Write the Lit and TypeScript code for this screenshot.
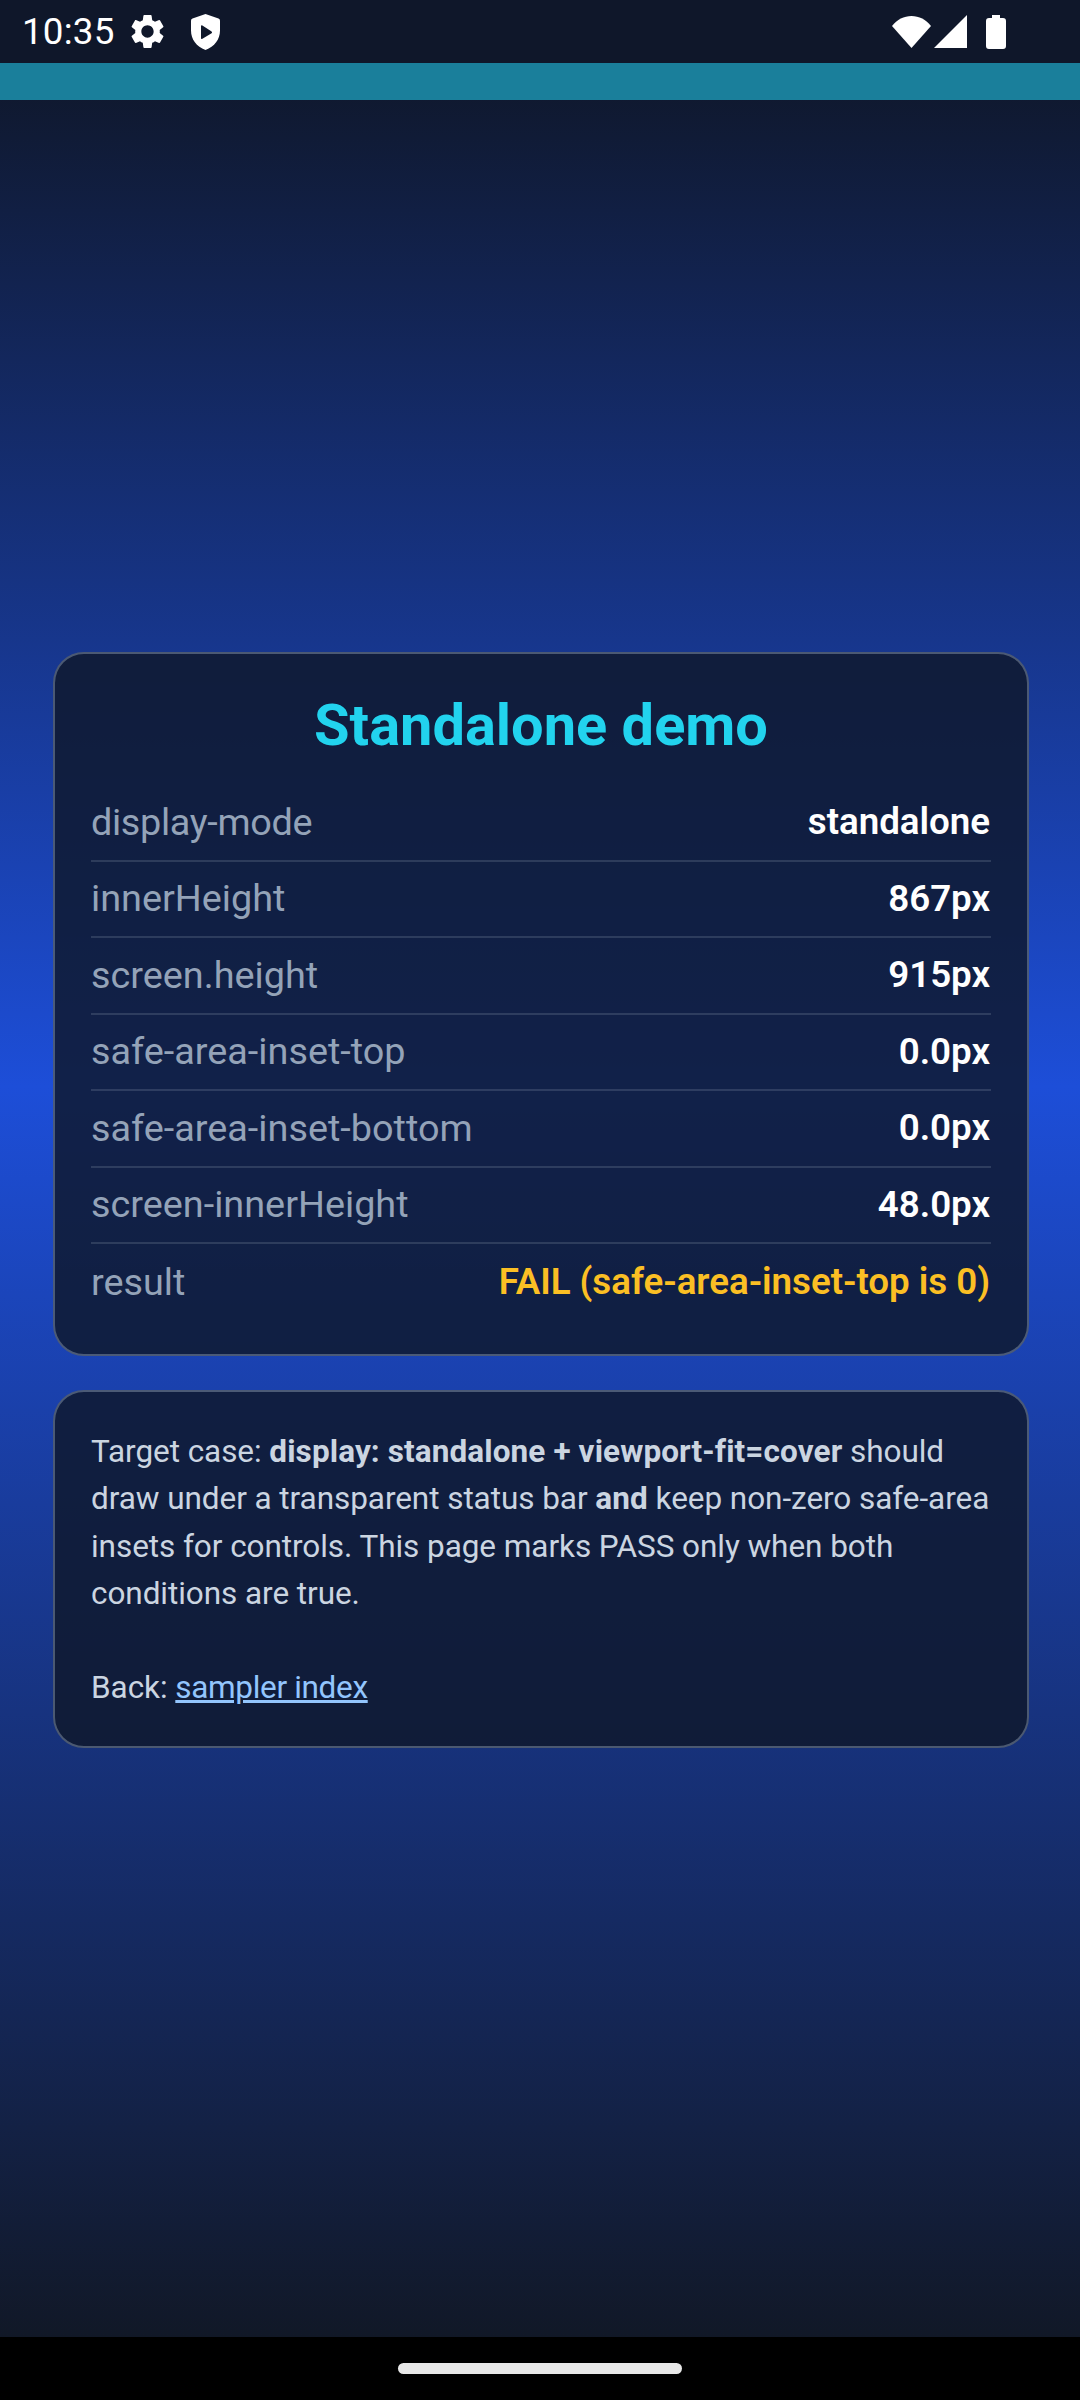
import { LitElement, html, css } from "lit";
import { customElement } from "lit/decorators.js";

const rows = [
  [html`<span class="tight">display-mode</span>`, "standalone"],
  ["innerHeight", "867px"],
  ["screen.height", "915px"],
  ["safe-area-inset-top", "0.0px"],
  ["safe-area-inset-bottom", "0.0px"],
  ["screen-innerHeight", "48.0px"],
];

@customElement("app-root")
export class AppRoot extends LitElement {
  static styles = css`
    :host {
      display: flex;
      flex-direction: column;
      width: 1080px;
      height: 2400px;
      background: #000;
      font-family: Roboto, "Liberation Sans", sans-serif;
      overflow: hidden;
    }
    .status {
      height: 63px;
      flex: none;
      background: #0f172a;
      display: flex;
      align-items: center;
      color: #fff;
      padding: 0 0 0 22px;
    }
    .time {
      font-size: 36.75px;
      letter-spacing: 0.2px;
    }
    .status-left {
      display: flex;
      gap: 23px;
      align-items: center;
      margin-left: 12px;
    }
    .status-right {
      display: flex;
      align-items: center;
      margin-left: auto;
      margin-right: 74px;
    }
    .wifi {
      margin-right: 3px;
    }
    .signal {
      margin-right: 19px;
    }
    svg {
      display: block;
      fill: #fff;
    }
    .page {
      flex: none;
      height: 2274px;
      position: relative;
      box-sizing: border-box;
      padding: 0 0 0 53px;
      display: flex;
      flex-direction: column;
      justify-content: center;
      gap: 34px;
      background: linear-gradient(180deg, #0f172a 0%, #1d4ed8 45%, #111827 100%);
    }
    .bar {
      position: absolute;
      top: 0;
      left: 0;
      right: 0;
      height: 37px;
      background: #1a7f9b;
    }
    .card {
      box-sizing: border-box;
      width: 976px;
      background: rgba(15, 23, 42, 0.82);
      border: 2px solid rgba(148, 163, 184, 0.45);
      border-radius: 31px;
      padding: 0 36px;
    }
    .card.info {
      padding: 36px 36px 34.5px;
      font-size: 31.5px;
      line-height: 47.25px;
      color: #cbd5e1;
      letter-spacing: -0.06px;
    }
    .card.stats {
      padding-top: 36px;
      padding-bottom: 33.25px;
    }
    h1 {
      margin: 0 0 25.25px;
      text-align: center;
      font-size: 57.75px;
      line-height: 70px;
      font-weight: 700;
      color: #22d3ee;
    }
    .row {
      display: flex;
      justify-content: space-between;
      height: 76.5px;
      box-sizing: border-box;
      align-items: center;
      padding-bottom: 1.5px;
      border-bottom: 2px solid rgba(148, 163, 184, 0.22);
    }
    .row:last-child {
      border-bottom: none;
    }
    .label {
      font-size: 37.8px;
      color: #94a3b8;
    }
    .tight {
      letter-spacing: -0.33px;
    }
    .value {
      font-size: 36.75px;
      color: #fff;
      font-weight: 600;
      padding-right: 1px;
      letter-spacing: -0.04px;
    }
    .value.fail {
      color: #fbbf24;
    }
    p {
      margin: 0;
    }
    p + p {
      margin-top: 47.25px;
    }
    b {
      font-weight: 700;
      letter-spacing: 0.1px;
    }
    a {
      color: #93c5fd;
      text-decoration: underline;
      letter-spacing: -0.33px;
    }
    .nav {
      flex: 1;
      background: #000;
      display: flex;
      justify-content: center;
    }
    .pill {
      width: 284px;
      height: 11px;
      margin-top: 26px;
      border-radius: 6px;
      background: #e8e8e8;
    }
  `;

  render() {
    return html`
      <div class="status">
        <span class="time">10:35</span>
        <div class="status-left">
          <svg width="41" height="41" viewBox="0 0 24 24">
            <path d="M19.14 12.94c.04-.3.06-.61.06-.94 0-.32-.02-.64-.07-.94l2.03-1.58a.49.49 0 0 0 .12-.61l-1.92-3.32a.488.488 0 0 0-.59-.22l-2.39.96c-.5-.38-1.03-.7-1.62-.94l-.36-2.54a.484.484 0 0 0-.48-.41h-3.84c-.24 0-.43.17-.47.41l-.36 2.54c-.59.24-1.13.57-1.62.94l-2.39-.96c-.22-.08-.47 0-.59.22L2.74 8.87c-.12.21-.08.47.12.61l2.03 1.58c-.05.3-.09.63-.09.94s.02.64.07.94l-2.03 1.58a.49.49 0 0 0-.12.61l1.92 3.32c.12.22.37.29.59.22l2.39-.96c.5.38 1.03.7 1.62.94l.36 2.54c.05.24.24.41.48.41h3.84c.24 0 .44-.17.47-.41l.36-2.54c.59-.24 1.13-.56 1.62-.94l2.39.96c.22.08.47 0 .59-.22l1.92-3.32c.12-.22.07-.47-.12-.61l-2.01-1.58zM12 15.6c-1.98 0-3.6-1.62-3.6-3.6s1.62-3.6 3.6-3.6 3.6 1.62 3.6 3.6-1.62 3.6-3.6 3.6z" />
          </svg>
          <svg width="29" height="36" viewBox="0 0 29 36">
            <path fill-rule="evenodd" d="M14.5 0 L27.5 4.6 Q29 5.2 29 6.8 V16.5 C29 25.5 23.5 32.5 14.5 36 C5.5 32.5 0 25.5 0 16.5 V6.8 Q0 5.2 1.5 4.6 Z M10 12.5 V24 Q10 25.6 11.4 24.8 L20.6 19.2 Q21.6 18.3 20.6 17.4 L11.4 11.6 Q10 10.8 10 12.5 Z" />
          </svg>
        </div>
        <div class="status-right">
          <svg class="wifi" width="39" height="32" viewBox="0 0 39 32">
            <path d="M19.5 32 L0 10 C5 3.5 12 0 19.5 0 C27 0 34 3.5 39 10 Z" />
          </svg>
          <svg class="signal" width="33" height="33" viewBox="0 0 33 33">
            <path d="M33 0 V33 H0 Z" />
          </svg>
          <svg width="20" height="34" viewBox="0 0 20 34">
            <path d="M6 0 H14 V3 H17 A3 3 0 0 1 20 6 V31 A3 3 0 0 1 17 34 H3 A3 3 0 0 1 0 31 V6 A3 3 0 0 1 3 3 H6 Z" />
          </svg>
        </div>
      </div>
      <div class="page">
        <div class="bar"></div>
        <section class="card stats">
          <h1>Standalone demo</h1>
          ${rows.map(
            ([k, v]) => html`<div class="row">
              <span class="label">${k}</span><span class="value">${v}</span>
            </div>`
          )}
          <div class="row">
            <span class="label">result</span>
            <span class="value fail">FAIL (safe-area-inset-top is 0)</span>
          </div>
        </section>
        <section class="card info">
          <p>
            Target case: <b>display: standalone + viewport-fit=cover</b> should
            draw under a transparent status bar <b>and</b> keep non-zero
            safe-area insets for controls. This page marks PASS only when both
            conditions are true.
          </p>
          <p>Back: <a href="#">sampler index</a></p>
        </section>
      </div>
      <div class="nav"><div class="pill"></div></div>
    `;
  }
}
